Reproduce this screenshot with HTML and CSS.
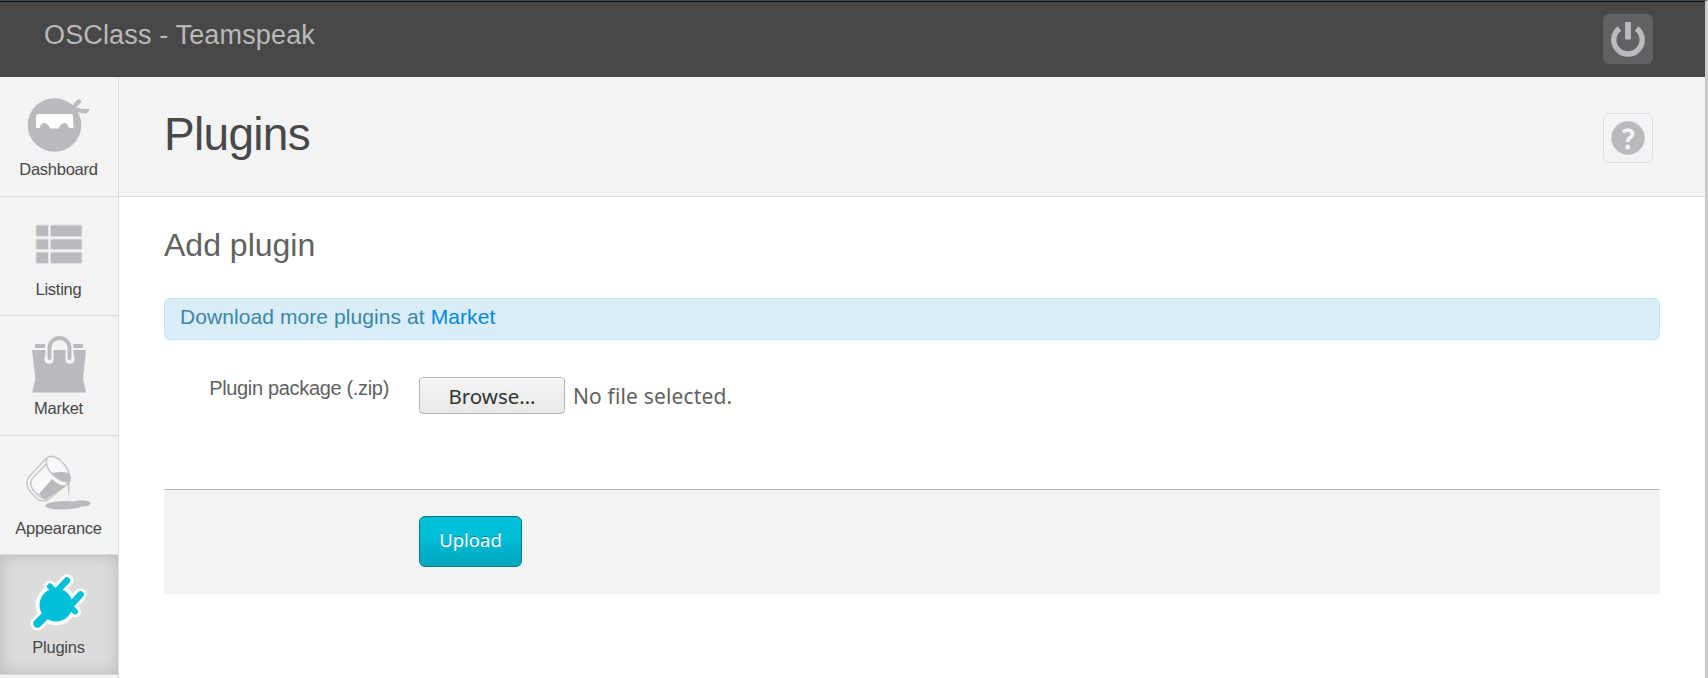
FILE: index.html
```html
<!DOCTYPE html>
<html lang="en">
<head>
<meta charset="utf-8">
<title>OSClass - Teamspeak</title>
<link rel="stylesheet" href="styles.css">
</head>
<body>
<div class="window">
  <header class="topbar">
    <span class="site-name">OSClass - Teamspeak</span>
    <a class="power" aria-label="Log out">
      <svg width="36" height="38" viewBox="0 0 36 38"><path d="M9.500 8.500A14.200 14.200 0 1 0 26.500 8.500" fill="none" stroke="#bab9be" stroke-width="5.400"/><path d="M18 2V19.500" stroke="#bab9be" stroke-width="5.800"/></svg>
    </a>
  </header>
  <div class="body">
    <nav class="sidebar">
      <a class="item">
        <svg class="icon" width="118" height="80" viewBox="0 0 118 80"><circle cx="54.500" cy="48" r="26.800" fill="#bab9be"/><path d="M71 30L77 23Q80.500 21 81.500 25L76 30.500Q84 33 89.500 31.500Q89 36.500 84 36.500L73 34Z" fill="#bab9be"/><path d="M38 37H71Q73 37 73 40L73.500 51H69Q67.500 46 64 46Q60 47 58.500 51.500H50Q49 47 44.500 46Q41 46 39.500 51H36V40Q36 37 38 37Z" fill="#fff"/></svg>
        <span>Dashboard</span>
      </a>
      <a class="item">
        <svg class="icon" width="118" height="80" viewBox="0 0 118 80"><g fill="#bab9be" stroke="#e0e0e2" stroke-width="1"><rect x="36" y="28" width="12.500" height="11.500" rx="1.500"/><rect x="50.500" y="28" width="31.500" height="11.500" rx="1.500"/><rect x="36" y="42" width="12.500" height="10.500" rx="1.500"/><rect x="50.500" y="42" width="31.500" height="10.500" rx="1.500"/><rect x="36" y="55" width="12.500" height="11.500" rx="1.500"/><rect x="50.500" y="55" width="31.500" height="11.500" rx="1.500"/></g></svg>
        <span>Listing</span>
      </a>
      <a class="item">
        <svg class="icon" width="118" height="80" viewBox="0 0 118 80"><path d="M32 34H86L83 63L86 76.500H32L35.500 63Z" fill="#bab9be"/><path d="M35 30H45M73 30H83" stroke="#bab9be" stroke-width="4"/><path d="M49.500 41V32A10 10 0 0 1 69.500 32V41" fill="none" stroke="#f3f3f3" stroke-width="8"/><circle cx="49" cy="43" r="4.800" fill="#f3f3f3"/><circle cx="70" cy="43" r="4.800" fill="#f3f3f3"/><path d="M49.500 42V32A10 10 0 0 1 69.500 32V42" fill="none" stroke="#bab9be" stroke-width="3.800" stroke-linecap="round"/></svg>
        <span>Market</span>
      </a>
      <a class="item">
        <svg class="icon" width="118" height="80" viewBox="0 0 118 80"><g fill="none" stroke="#c7c6ca" stroke-width="1.600" stroke-linejoin="round"><path d="M46.500 22L29 41Q25 46 29 54L36 62Q42 67 49 63L68 47" fill="#f8f8f8"/><path d="M48 26L32 43Q29 47 33 54L40 61Q45 63 48 60"/><path d="M47 22Q51 18 60 24Q71 34 70 45Q63 48 53 39Q44 30 47 22Z" fill="#f8f8f8"/></g><path d="M52 37Q62 35 69 37Q72 41 69.500 46L69 63L67.500 46Q60 46 52 37Z" fill="#bab9be"/><path d="M52 43L39 58L45 64L66 50Q58 49 52 43Z" fill="#bab9be"/><path d="M46 68Q54 65 67 65L74 65.500Q84 63 90 66Q91 69 88 70Q81 70 78 72Q60 75 48 72Q44 70 46 68Z" fill="#bab9be"/></svg>
        <span>Appearance</span>
      </a>
      <a class="item active">
        <svg class="icon" width="118" height="80" viewBox="0 0 118 80"><g fill="#fff" stroke="#fff" stroke-linecap="round"><circle cx="56" cy="50" r="20"/><path d="M37.500 68.500L48 58" stroke-width="14"/><path d="M50 31.500L75 56.500" stroke-width="12"/><path d="M57 36L67 25.500M71 50L80.500 39.500" stroke-width="12.500"/></g><g fill="#00bfd9" stroke="#00bfd9" stroke-linecap="round"><circle cx="56" cy="50" r="16.500" stroke="none"/><path d="M37.500 68.500L49 57" stroke-width="8.500"/><path d="M50 31.500L75 56.500" stroke-width="6"/><path d="M56 37L67 25.500M70 51L80.500 39.500" stroke-width="6.500"/></g></svg>
        <span>Plugins</span>
      </a>
    </nav>
    <main class="content">
      <div class="page-head">
        <h1>Plugins</h1>
        <a class="help" aria-label="Help"><svg width="36" height="36" viewBox="0 0 36 36"><circle cx="18" cy="18" r="16.700" fill="#bab9be"/><path d="M13 12Q17 9.300 20.500 10.700Q23.500 12.500 22 16Q18 18.500 17.800 22" fill="none" stroke="#f3f3f3" stroke-width="3.700"/><circle cx="17.700" cy="27" r="2.400" fill="#f3f3f3"/></svg></a>
      </div>
      <div class="page">
        <h2>Add plugin</h2>
        <p class="notice">Download more plugins at <a>Market</a></p>
        <form>
          <div class="row">
            <label>Plugin package (.zip)</label>
            <button type="button" class="browse"><span>Browse…</span></button>
            <span class="file-name">No file selected.</span>
          </div>
          <div class="actions"><button type="button" class="upload"><span>Upload</span></button></div>
        </form>
      </div>
    </main>
  </div>
</div>
</body>
</html>
```
FILE: styles.css
```css
* { box-sizing: border-box; }
body { margin: 0; background: #fff; font-family: "Liberation Sans", Arial, sans-serif; overflow: hidden; }
.window { height: 678px; display: flex; flex-direction: column; border-top: 1px solid #3d474d; border-right: 3px solid #cacbc8; }
.topbar { height: 76px; flex: none; border-top: 1px solid #10151a; background: #484849; display: flex; justify-content: space-between; align-items: flex-start; padding: 12px 52px 0 44px; }
.site-name { color: #b9b9b9; font-size: 27px; line-height: 42px; letter-spacing: .15px; }
.power { width: 50px; height: 50px; border-radius: 6px; background: #626262; display: flex; align-items: center; justify-content: center; }
.body { flex: 1; min-height: 0; display: flex; }
.sidebar { width: 119px; flex: none; background: #f3f3f3; border-right: 1px solid #dcdcdc; overflow: hidden; }
.item { height: 119.5px; border-bottom: 1px solid #dcdcdc; display: flex; flex-direction: column; align-items: center; color: #48484a; font-size: 16.5px; letter-spacing: -.25px; }
.item .icon { flex: none; display: block; }
.item span { line-height: 24px; padding-right: 1px; }
.active { background: #dcdcdc; box-shadow: inset 0 0 16px rgba(0,0,0,.17); }
.content { flex: 1; min-width: 0; }
.page-head { height: 120px; background: #f3f3f3; border-bottom: 1px solid #dcdcdc; padding: 0 52px 0 45px; display: flex; justify-content: space-between; align-items: flex-start; }
h1 { margin: 29px 0 0; color: #48484a; font-size: 46px; font-weight: 400; line-height: 56px; letter-spacing: -.7px; }
.help { margin-top: 36px; width: 50px; height: 50px; border: 1px solid #dcdcdc; border-radius: 6px; display: flex; align-items: center; justify-content: center; }
.page { padding: 24px 45px 0; }
h2 { margin: 0; color: #616161; font-size: 32px; font-weight: 400; line-height: 48px; }
.notice { margin: 29px 0 0; height: 42px; border: 1px solid #bce8f1; border-radius: 6px; background: #d9edf7; padding: 0 15px; font-size: 21px; letter-spacing: .08px; line-height: 36px; color: #3a87ad; }
.notice a { color: #0088e8; }
.row { display: flex; height: 149px; padding-top: 37px; align-items: flex-start; }
label { width: 225px; margin-right: 30px; text-align: right; color: #616161; font-size: 20px; letter-spacing: -.33px; line-height: 23px; white-space: nowrap; }
.browse, .upload, .file-name { font-family: "Noto Sans", sans-serif; }
.browse { width: 146px; height: 37px; padding: 0; border: 1px solid #b8b5b0; border-radius: 4px; background: linear-gradient(#f6f5f4, #eae8e6); box-shadow: inset 0 1px #fff; font-size: 20.5px; color: #2e3436; }
.file-name { margin-left: 8px; font-size: 21px; letter-spacing: .15px; line-height: 39px; color: #616161; }
.actions { height: 105px; padding: 26px 0 0 255px; border-top: 1px solid #b9b9b9; background: #f3f3f3; }
.upload { width: 103px; height: 51px; padding: 0 0 4px; border: 1px solid #007c86; border-radius: 6px; background: linear-gradient(#00bfd9 35%, #00a6bd); font-size: 18.5px; color: #fff; text-shadow: 0 -1px rgba(0,0,0,.3); display: block; }
```
